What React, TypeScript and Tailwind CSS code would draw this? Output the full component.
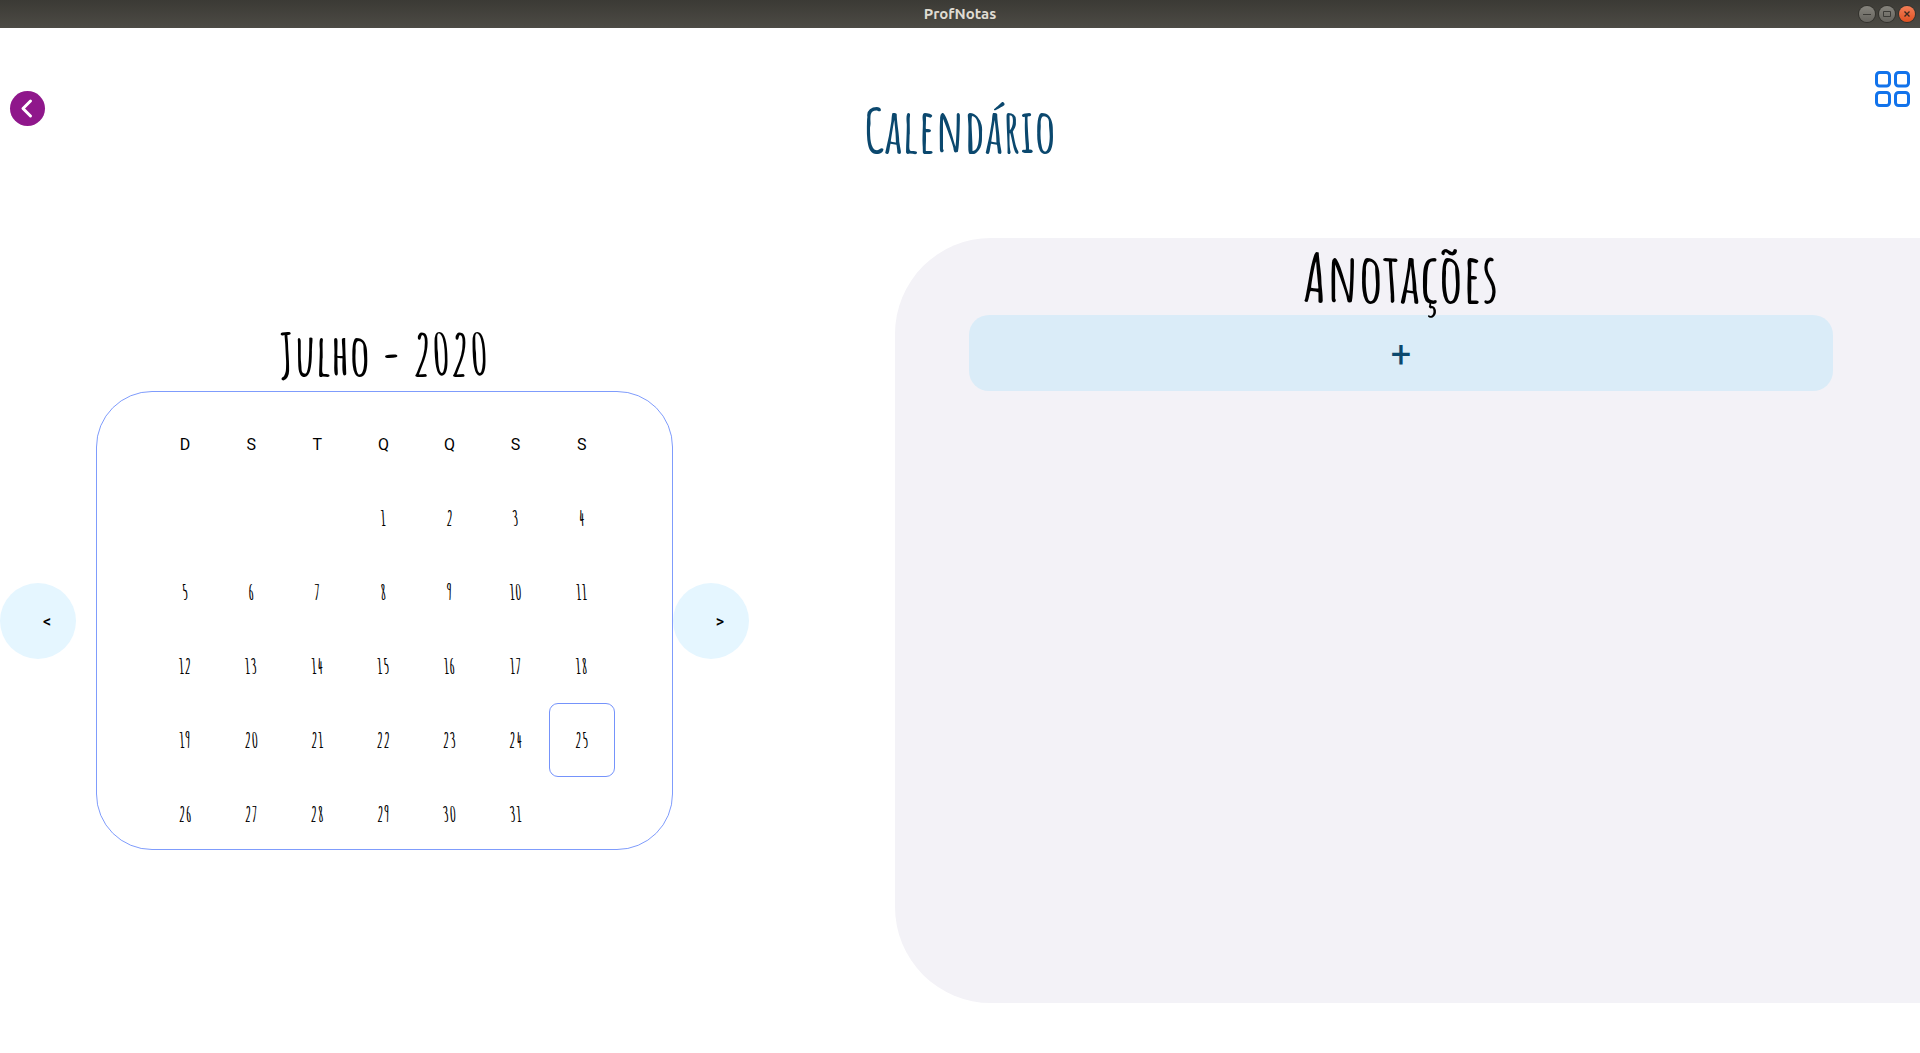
import React from "react";

const hand = "font-['Amatic_SC','Liberation_Sans_Narrow','Liberation_Sans',sans-serif]";
const weekdays = ["D", "S", "T", "Q", "Q", "S", "S"];
const weeks: (number | null)[][] = [
  [null, null, null, 1, 2, 3, 4],
  [5, 6, 7, 8, 9, 10, 11],
  [12, 13, 14, 15, 16, 17, 18],
  [19, 20, 21, 22, 23, 24, 25],
  [26, 27, 28, 29, 30, 31, null],
];
const today = 25;

function TitleBar() {
  const round =
    "flex size-4 items-center justify-center rounded-full shadow-[0_0_0_1px_#33322d]";
  return (
    <div className="grid h-7 shrink-0 grid-cols-[1fr_auto_1fr] items-center bg-linear-to-b from-[#3b3a35] to-[#4d4b45] px-[5px]">
      <span className="col-start-2 font-['Ubuntu','Noto_Sans',sans-serif] text-[15px] font-bold text-[#dfdbd2]">
        ProfNotas
      </span>
      <div className="flex justify-end gap-1">
        <button aria-label="Minimizar" className={`${round} bg-linear-to-b from-[#86847d] to-[#66645e]`}>
          <svg viewBox="0 0 16 16" className="size-4" stroke="#3c3b37" fill="none"><path d="M4 8.5h8" /></svg>
        </button>
        <button aria-label="Maximizar" className={`${round} bg-linear-to-b from-[#86847d] to-[#66645e]`}>
          <svg viewBox="0 0 16 16" className="size-4" stroke="#3c3b37" fill="none"><path d="M4.5 5.5h7v5h-7z" /></svg>
        </button>
        <button aria-label="Fechar" className={`${round} bg-linear-to-b from-[#f37e56] to-[#e0501f]`}>
          <svg viewBox="0 0 16 16" className="size-4" stroke="#3c2a20" strokeWidth="1.4" fill="none"><path d="M5.500 5.500l5 5M10.500 5.500l-5 5" /></svg>
        </button>
      </div>
    </div>
  );
}

function Header() {
  return (
    <header className="grid h-[210px] shrink-0 grid-cols-[1fr_auto_1fr] items-start px-[10px]">
      <button aria-label="Voltar" className="mt-[63px] flex size-[35px] items-center justify-center rounded-full bg-[#8f178b]">
        <svg viewBox="0 0 35 35" className="size-[35px]" fill="none" stroke="#fff" strokeWidth="3" strokeLinecap="round" strokeLinejoin="round">
          <path d="M20.500 10l-7.500 7.500 7.500 7.500" />
        </svg>
      </button>
      <h1 className={`${hand} mt-[66px] text-[60px] leading-[72px] font-bold text-[#0b486e]`}>
        Calendário
      </h1>
      <button aria-label="Menu" className="mt-[43px] h-[36px] w-[35px] justify-self-end">
        <svg viewBox="0 0 35 36" className="h-[36px] w-[35px]" fill="none" stroke="#1273eb" strokeWidth="3">
          <rect x="1.500" y="1.500" width="13" height="13.500" rx="3" />
          <rect x="20.500" y="1.500" width="13" height="13.500" rx="3" />
          <rect x="1.500" y="21.500" width="13" height="13" rx="3" />
          <rect x="20.500" y="21.500" width="13" height="13" rx="3" />
        </svg>
      </button>
    </header>
  );
}

function Calendar() {
  const arrow =
    "row-start-2 flex size-[76px] items-center justify-center self-center rounded-full bg-[#e5f6ff] pt-0.5 pl-[18px] font-['Roboto',sans-serif] text-[16px] font-medium text-black";
  return (
    <section className="grid w-[39%] shrink-0 grid-cols-[76px_1fr_76px] grid-rows-[153px_459px] content-start">
      <h2 className={`${hand} col-start-2 self-end pl-[19px] text-center text-[57px] leading-[74px] font-bold text-black`}>
        Julho - 2020
      </h2>
      <button aria-label="Mês anterior" className={`${arrow} col-start-1`}>&lt;</button>
      <div className="col-start-2 row-start-2 ml-5 rounded-[56px] border border-[#7f9cfc] pt-[14px] pr-[57px] pl-[55px]">
        <table className="w-full table-fixed border-separate border-spacing-0 text-center text-black">
          <thead>
            <tr>
              {weekdays.map((d, i) => (
                <th key={i} scope="col" className="h-[75px] p-0 pt-0.5 font-['Roboto',sans-serif] text-[16px] font-normal">{d}</th>
              ))}
            </tr>
          </thead>
          <tbody>
            {weeks.map((w, i) => (
              <tr key={i}>
                {w.map((d, j) => (
                  <td key={j} className="h-[74px] p-0">
                    {d !== null && (
                      <button
                        className={`${hand} block h-[74px] w-full rounded-[9px] border pt-0.5 text-[21px] font-bold ${d === today ? "border-[#7593fb]" : "border-transparent"}`}
                      >
                        {d}
                      </button>
                    )}
                  </td>
                ))}
              </tr>
            ))}
          </tbody>
        </table>
      </div>
      <button aria-label="Próximo mês" className={`${arrow} col-start-3`}>&gt;</button>
    </section>
  );
}

function Notes() {
  return (
    <section className="ml-auto flex w-[53.4%] flex-col rounded-l-[96px] bg-[#f3f2f7] pr-[87px] pl-[74px]">
      <h2 className={`${hand} relative z-10 h-[77px] text-center text-[67px] leading-[79px] font-bold text-black`}>
        Anotações
      </h2>
      <button aria-label="Adicionar anotação" className="h-[76px] rounded-[20px] bg-[#daecf8] pt-1 font-['Roboto',sans-serif] text-[36px] text-[#0b486e]">
        +
      </button>
    </section>
  );
}

export default function App() {
  return (
    <div className="flex min-h-screen flex-col bg-white">
      <TitleBar />
      <Header />
      <main className="flex flex-1 pb-[50px]">
        <Calendar />
        <Notes />
      </main>
    </div>
  );
}
